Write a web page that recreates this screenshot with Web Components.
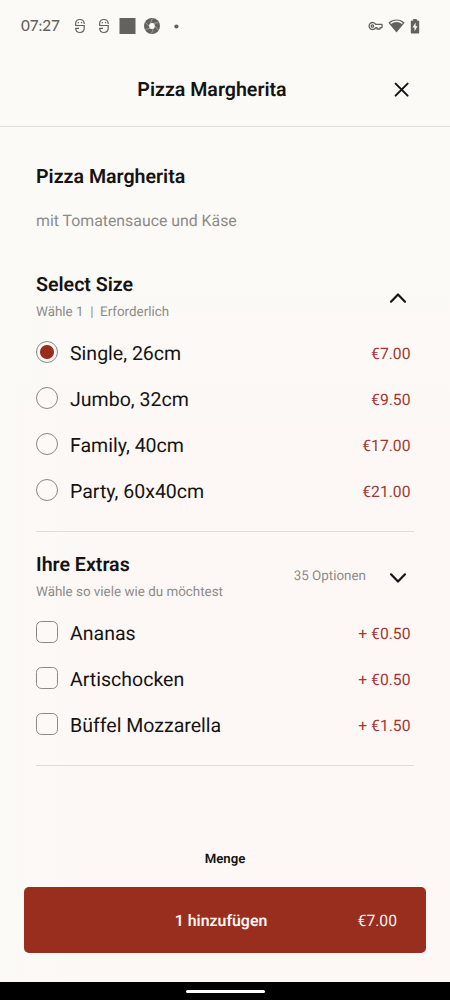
<!DOCTYPE html>
<html lang="de">
<head>
<meta charset="utf-8">
<title>Pizza Margherita</title>
<style>
body{margin:0;font-family:Roboto,sans-serif;color:#151412;background:#fbfaf6;text-rendering:geometricPrecision}
</style>
</head>
<body>
<order-screen></order-screen>
<script>
function define(name, html) {
  const t = document.createElement('template');
  t.innerHTML = html;
  customElements.define(name, class extends HTMLElement {
    constructor() {
      super();
      this.attachShadow({mode: 'open'}).appendChild(t.content.cloneNode(true));
    }
  });
}

define('s-badge', `<style>:host{display:block;flex:none}svg{display:block}</style>
<svg width="12" height="16" viewBox="0 0 12 16" fill="none" stroke="currentColor" stroke-width="1.200"><path d="M10.200 6.100V5.400C10.200 3.200 8.500 1.500 6 1.500S1.700 3.200 1.700 5.400v2.100h8.500v2.600c0 2.600-1.700 4.400-4.200 4.400s-4.300-1.700-4.300-4.200h3.300"/><path d="M3.700 4.600h1.200M7 4.600h1.200"/></svg>`);

define('status-bar', `<style>
:host{display:flex;height:52px;box-sizing:border-box;padding:0 30px 0 21px;align-items:center;color:#63625d}
.time{font:500 15.300px/20px Lato,sans-serif;letter-spacing:-.1px;width:53px;white-space:nowrap}
svg{display:block;flex:none}
.gap{flex:1}
</style>
<span class="time">07:27</span>
<s-badge></s-badge>
<s-badge style="margin-left:12px"></s-badge>
<svg style="margin-left:9px" width="17" height="16"><rect x=".5" width="16" height="16" fill="currentColor"/></svg>
<svg style="margin-left:8px" width="16" height="16" viewBox="0 0 16 16"><circle cx="8" cy="8" r="8" fill="currentColor"/><circle cx="8" cy="8" r="2.900" fill="#fbfaf6"/><path d="M5 8 1.200 4.400M6.300 5.600 8.400.5M9.200 5.300l5.200-.5M10.900 8l3.400 4M9.400 10.600 7.500 15.400M6.500 10.500l-5.100.8" stroke="#fbfaf6" stroke-width=".4"/></svg>
<svg style="margin-left:14px" width="5" height="5"><circle cx="2.400" cy="2.500" r="2.100" fill="currentColor"/></svg>
<span class="gap"></span>
<svg style="margin-right:1px" width="15" height="10" viewBox="0 0 15 10" fill="none" stroke="currentColor" stroke-width="1.300" stroke-linejoin="round"><path d="M7.700 3.400A3.500 3.500 0 1 0 7.700 6.600H9V8h3V6.600h2V3.400z"/><circle cx="4.400" cy="5" r="1.200"/></svg>
<svg style="margin-left:4px" width="17" height="14" viewBox="0 0 17 14"><path fill="currentColor" d="M8.500 13.500.4 3.700C5-.5 12-.5 16.600 3.700z"/><path d="M2.600 4.500C6.100 1.500 10.900 1.500 14.400 4.500" fill="none" stroke="#fbfaf6" stroke-width="1.300"/></svg>
<svg style="margin-left:5px" width="10" height="15" viewBox="0 0 10 15"><path fill="currentColor" d="M3.200 0h3.600v1.500h1.400q1 0 1 1v11q0 1-1 1H1.800q-1 0-1-1v-11q0-1 1-1h1.400z"/><path fill="#fbfaf6" d="M5.600 3.600 2.600 8.600h1.900v3.700l3-5H5.600z"/></svg>
`);

define('title-bar', `<style>
:host{display:grid;grid-template-columns:1fr auto 1fr;align-items:center;height:75px;box-sizing:border-box;border-bottom:1px solid #dfdeda;padding:0 40px 0 14px}
.t{grid-column:2;font-size:19.600px;line-height:24px;font-weight:600;padding-top:2px}
svg{justify-self:end;display:block}
</style>
<span class="t"><slot></slot></span>
<svg width="18" height="18" viewBox="0 0 18 18" fill="none" stroke="#151412" stroke-width="2" stroke-linecap="round"><path d="M3.600 3.600 15.600 15.600M15.600 3.600 3.600 15.600"/></svg>
`);

define('product-intro', `<style>
:host{display:block;height:125px;box-sizing:border-box;padding-top:38px}
.n{font-size:19.600px;line-height:24px;font-weight:600}
.d{margin-top:22px;font-size:15.850px;line-height:20px;color:#8d8b88}
</style>
<div class="n"><slot name="name"></slot></div><div class="d"><slot></slot></div>
`);

define('option-group', `<style>
:host{display:block;border-bottom:1px solid #e0dcda;padding-bottom:17px}
header{display:flex;height:78px;box-sizing:border-box;padding:21px 7px 0 0}
.text{flex:1}
.h{font-size:19.600px;line-height:24px;font-weight:600}
.s{font-size:13.400px;line-height:16px;margin-top:8px;color:#8d8b88;white-space:pre}
.c{font-size:13.400px;line-height:16px;margin:16px 23px 0 0;color:#8d8b88}
svg{display:block;margin-top:17px}
:host([open]) svg{transform:scaleY(-1)}
</style>
<header><div class="text"><div class="h"><slot name="title"></slot></div><div class="s"><slot name="hint"></slot></div></div>
<div class="c"><slot name="count"></slot></div>
<svg width="18" height="16" viewBox="0 0 18 16" fill="none" stroke="#151412" stroke-width="2.200" stroke-linecap="round" stroke-linejoin="round"><path d="M2 4.300 9 11.500 16 4.300"/></svg></header>
<slot></slot>
`);

define('option-row', `<style>
:host{display:flex;align-items:center;height:46px;padding-right:3.500px}
i{display:grid;place-items:center;box-sizing:border-box;width:22px;height:22px;border:1px solid #8b8987;border-radius:5.500px;margin:-2px 12px 0 0}
:host([radio]) i{border-radius:50%}
:host([checked]) i::after{content:"";width:13.500px;height:13.500px;border-radius:50%;background:#982d1e}
.l{flex:1;font-size:19.550px;line-height:24px;padding-top:2px}
.p{font-size:15.700px;line-height:20px;margin-top:1px;color:#a23a2e}
</style>
<i></i><span class="l"><slot></slot></span><span class="p"><slot name="price"></slot></span>
`);

define('order-button', `<style>
:host{display:grid;grid-template-columns:1fr auto 1fr;align-items:center;box-sizing:border-box;height:66px;margin:0 24px;padding:1px 29px 0 21px;border-radius:5px;background:#992d1e;color:#fff4ef}
.l{grid-column:2;font-size:15.850px;font-weight:600}
.p{justify-self:end;font-size:15.700px}
</style>
<span class="l"><slot></slot></span><span class="p"><slot name="price"></slot></span>
`);

define('nav-strip', `<style>
:host{display:grid;place-items:center;height:18px;background:#000}
b{width:79px;height:2.500px;border-radius:2px;background:#fff;margin-top:1px}
</style><b></b>`);

define('order-screen', `<style>
:host{display:flex;flex-direction:column;height:1000px;background:linear-gradient(90deg,#fbfaf6 0,#fbfaf600 80px),linear-gradient(#fbfaf6 0,#fbfaf6 260px,#fdf8f6 440px)}
main{padding:0 36px}
.q{flex:1;display:flex;align-items:flex-end;justify-content:center;font-size:13.200px;line-height:16px;font-weight:600;padding-bottom:19px}
nav-strip{margin-top:29px}
</style>
<status-bar></status-bar>
<title-bar>Pizza Margherita</title-bar>
<main>
<product-intro><span slot="name">Pizza Margherita</span>mit Tomatensauce und Käse</product-intro>
<option-group open><span slot="title">Select Size</span><span slot="hint">Wähle 1  |  Erforderlich</span>
<option-row radio checked>Single, 26cm<span slot="price">€7.00</span></option-row>
<option-row radio>Jumbo, 32cm<span slot="price">€9.50</span></option-row>
<option-row radio>Family, 40cm<span slot="price">€17.00</span></option-row>
<option-row radio>Party, 60x40cm<span slot="price">€21.00</span></option-row>
</option-group>
<option-group><span slot="title">Ihre Extras</span><span slot="hint">Wähle so viele wie du möchtest</span><span slot="count">35 Optionen</span>
<option-row>Ananas<span slot="price">+ €0.50</span></option-row>
<option-row>Artischocken<span slot="price">+ €0.50</span></option-row>
<option-row>Büffel Mozzarella<span slot="price">+ €1.50</span></option-row>
</option-group>
</main>
<div class="q">Menge</div>
<order-button>1 hinzufügen<span slot="price">€7.00</span></order-button>
<nav-strip></nav-strip>
`);
</script>
</body>
</html>
